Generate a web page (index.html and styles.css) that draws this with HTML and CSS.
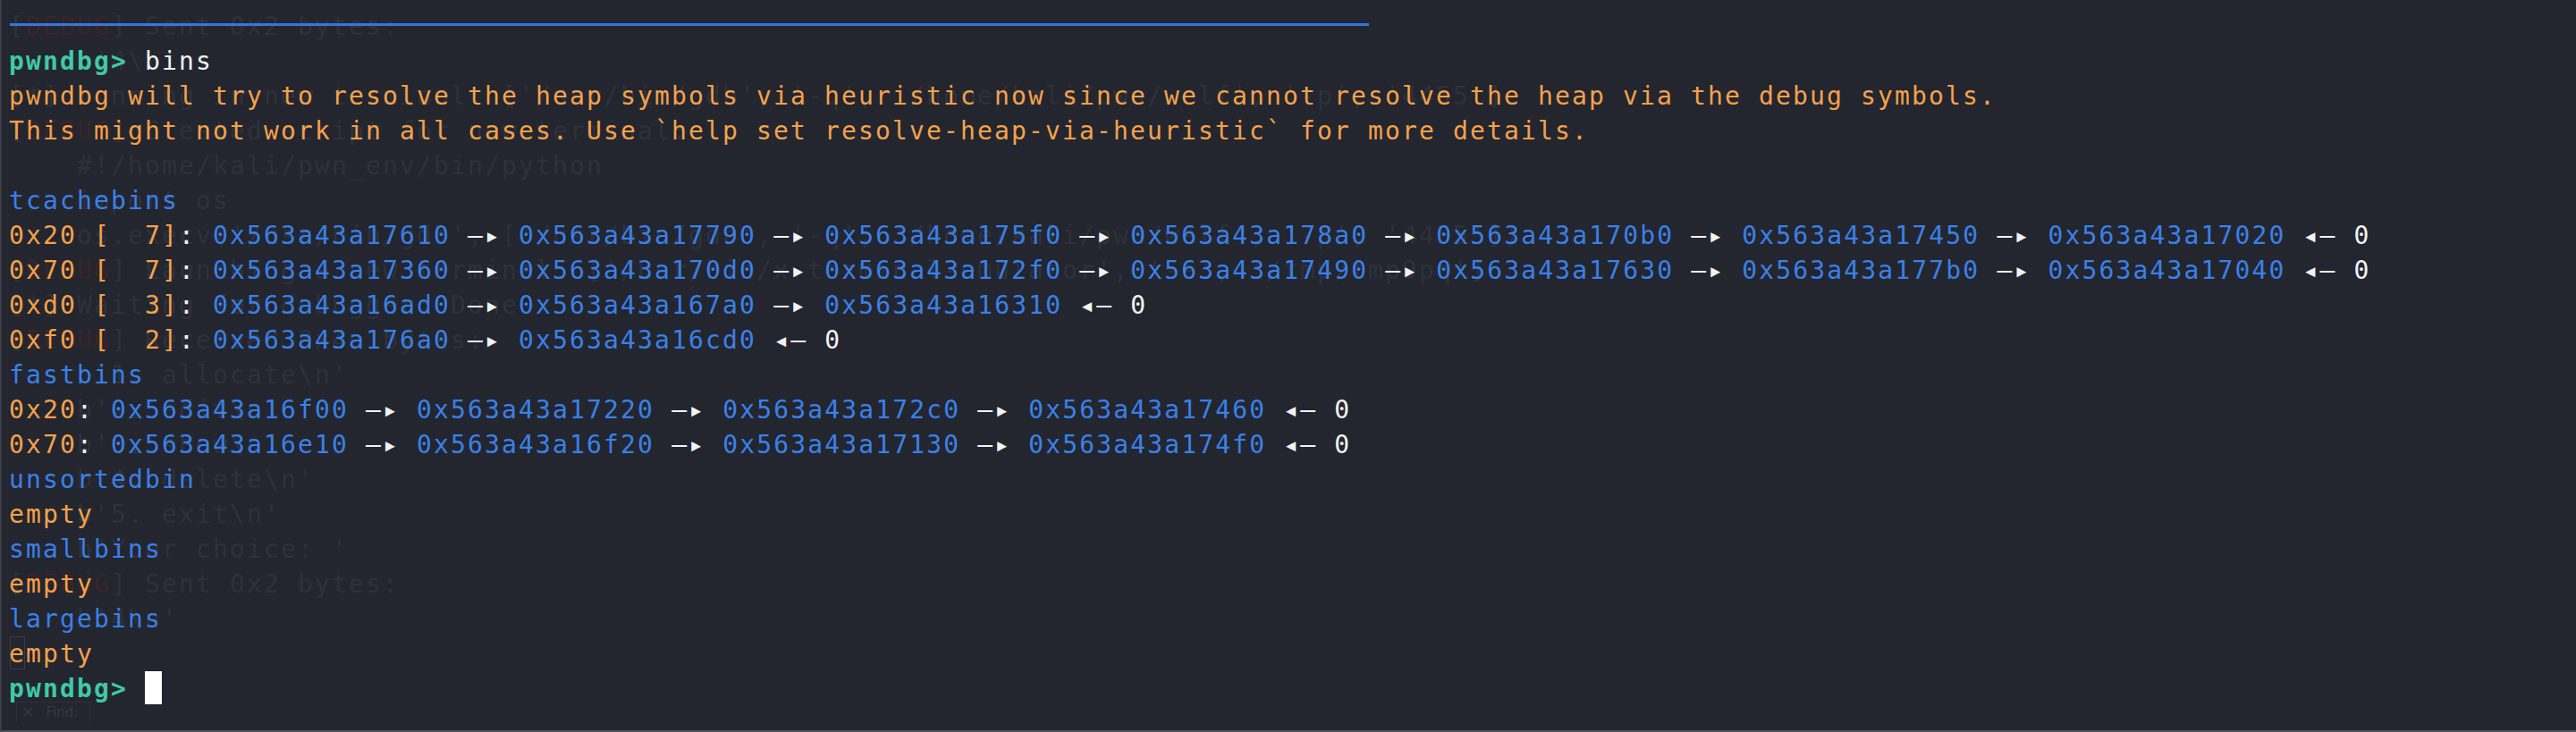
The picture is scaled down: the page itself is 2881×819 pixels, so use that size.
FILE: index.html
```html
<!DOCTYPE html>
<html lang="en">
<head>
<meta charset="utf-8">
<title>pwndbg bins</title>
<link rel="stylesheet" href="styles.css">
</head>
<body>
<div class="term">
  <div class="stack">
    <div class="ghost">
<pre class="ghost-text">[<span class="gr">DEBUG</span>] Sent 0x2 bytes:
    b'4\n'
[*] running in new terminal: ['/usr/bin/gdb', '-q', '/home/kali/pwn/welf', '-p', '4455']
[<span class="gr">DEBUG</span>] Created script for new terminal:
    #!/home/kali/pwn_env/bin/python
    import os
    os.execv('/usr/bin/gdb', ['/usr/bin/gdb', '-q', '/home/kali/pwn/welf', '-p', '4455'])
[<span class="gr">DEBUG</span>] Launching a new terminal: ['/usr/bin/x-terminal-emulator', '-e', '/tmp/tmp9pq']
[*] Waiting for debugger: Done
[<span class="gr">DEBUG</span>] Received 0x4e bytes:
    b'1. allocate\n'
    b'2. edit\n'
    b'3. show\n'
    b'4. delete\n'
    b'5. exit\n'
    b'Your choice: '
[<span class="gr">DEBUG</span>] Sent 0x2 bytes:
    b'4\n'
<span class="gcur"> </span></pre>
      <div class="find"><span class="find-x">✕</span><span class="find-label">Find:</span></div>
    </div>
    <div class="front">
      <div class="rule"></div>
<pre class="out"><span class="p">pwndbg&gt;</span> <span class="w">bins</span>
<span class="o">pwndbg will try to resolve the heap symbols via heuristic now since we cannot resolve the heap via the debug symbols.</span>
<span class="o">This might not work in all cases. Use `help set resolve-heap-via-heuristic` for more details.</span>

<span class="b">tcachebins</span>
<span class="o">0x20 [  7]</span><span class="w">:</span> <span class="b">0x563a43a17610</span> <span class="w">—▸</span> <span class="b">0x563a43a17790</span> <span class="w">—▸</span> <span class="b">0x563a43a175f0</span> <span class="w">—▸</span> <span class="b">0x563a43a178a0</span> <span class="w">—▸</span> <span class="b">0x563a43a170b0</span> <span class="w">—▸</span> <span class="b">0x563a43a17450</span> <span class="w">—▸</span> <span class="b">0x563a43a17020</span> <span class="w">◂— 0</span>
<span class="o">0x70 [  7]</span><span class="w">:</span> <span class="b">0x563a43a17360</span> <span class="w">—▸</span> <span class="b">0x563a43a170d0</span> <span class="w">—▸</span> <span class="b">0x563a43a172f0</span> <span class="w">—▸</span> <span class="b">0x563a43a17490</span> <span class="w">—▸</span> <span class="b">0x563a43a17630</span> <span class="w">—▸</span> <span class="b">0x563a43a177b0</span> <span class="w">—▸</span> <span class="b">0x563a43a17040</span> <span class="w">◂— 0</span>
<span class="o">0xd0 [  3]</span><span class="w">:</span> <span class="b">0x563a43a16ad0</span> <span class="w">—▸</span> <span class="b">0x563a43a167a0</span> <span class="w">—▸</span> <span class="b">0x563a43a16310</span> <span class="w">◂— 0</span>
<span class="o">0xf0 [  2]</span><span class="w">:</span> <span class="b">0x563a43a176a0</span> <span class="w">—▸</span> <span class="b">0x563a43a16cd0</span> <span class="w">◂— 0</span>
<span class="b">fastbins</span>
<span class="o">0x20</span><span class="w">:</span> <span class="b">0x563a43a16f00</span> <span class="w">—▸</span> <span class="b">0x563a43a17220</span> <span class="w">—▸</span> <span class="b">0x563a43a172c0</span> <span class="w">—▸</span> <span class="b">0x563a43a17460</span> <span class="w">◂— 0</span>
<span class="o">0x70</span><span class="w">:</span> <span class="b">0x563a43a16e10</span> <span class="w">—▸</span> <span class="b">0x563a43a16f20</span> <span class="w">—▸</span> <span class="b">0x563a43a17130</span> <span class="w">—▸</span> <span class="b">0x563a43a174f0</span> <span class="w">◂— 0</span>
<span class="b">unsortedbin</span>
<span class="o">empty</span>
<span class="b">smallbins</span>
<span class="o">empty</span>
<span class="b">largebins</span>
<span class="o">empty</span>
<span class="p">pwndbg&gt;</span> <span class="cursor"></span></pre>
    </div>
  </div>
</div>
</body>
</html>
```

FILE: styles.css
```css
html, body {
  margin: 0;
  padding: 0;
  background: #23262f;
  overflow: hidden;
}

.term {
  box-sizing: border-box;
  width: 2881px;
  height: 819px;
  background: #23262f;
  border-left: 2px solid #3a3d45;
  border-bottom: 2px solid #4d4f55;
  overflow: hidden;
}

.stack {
  display: grid;
  grid-template-columns: 1fr;
  grid-template-rows: 1fr;
  height: 100%;
}

.ghost,
.front {
  grid-area: 1 / 1;
  min-width: 0;
}

pre {
  margin: 0;
  font-family: "DejaVu Sans Mono", "Liberation Mono", monospace;
  font-size: 28px;
  letter-spacing: 2.143px;
  line-height: 39px;
  white-space: pre;
}

/* background (see-through) window */
.ghost {
  display: flex;
  flex-direction: column;
  padding: 10px 0 0 8px;
}

.ghost-text {
  color: #2e313a;
}

.gr {
  color: #3a2429;
}

.gcur {
  display: inline-block;
  width: 17px;
  height: 37px;
  margin-left: 1px;
  vertical-align: top;
  border: 1px solid #3a3d46;
  box-sizing: border-box;
}

.find {
  display: flex;
  align-items: center;
  gap: 14px;
  margin: 34px 0 0 8px;
  width: 75px;
  height: 22px;
  padding-left: 6px;
  border: 1px solid #2c2f37;
  border-bottom: none;
  font-family: "DejaVu Sans", sans-serif;
  font-size: 15px;
  color: #363943;
}

.find-x {
  font-size: 15px;
}

/* foreground terminal */
.front {
  display: flex;
  flex-direction: column;
  padding: 26px 0 0 8px;
}

.rule {
  width: 1520px;
  height: 3px;
  margin: 0 0 20px 1px;
  background: #3577e0;
}

.out {
  color: #f2f2f2;
}

.p {
  color: #40c9a7;
  font-weight: bold;
}

.w {
  color: #f2f2f2;
}

.o {
  color: #f4a14b;
}

.b {
  color: #3a80e8;
}

.cursor {
  display: inline-block;
  width: 19px;
  height: 37px;
  vertical-align: top;
  background: #ffffff;
}
```
